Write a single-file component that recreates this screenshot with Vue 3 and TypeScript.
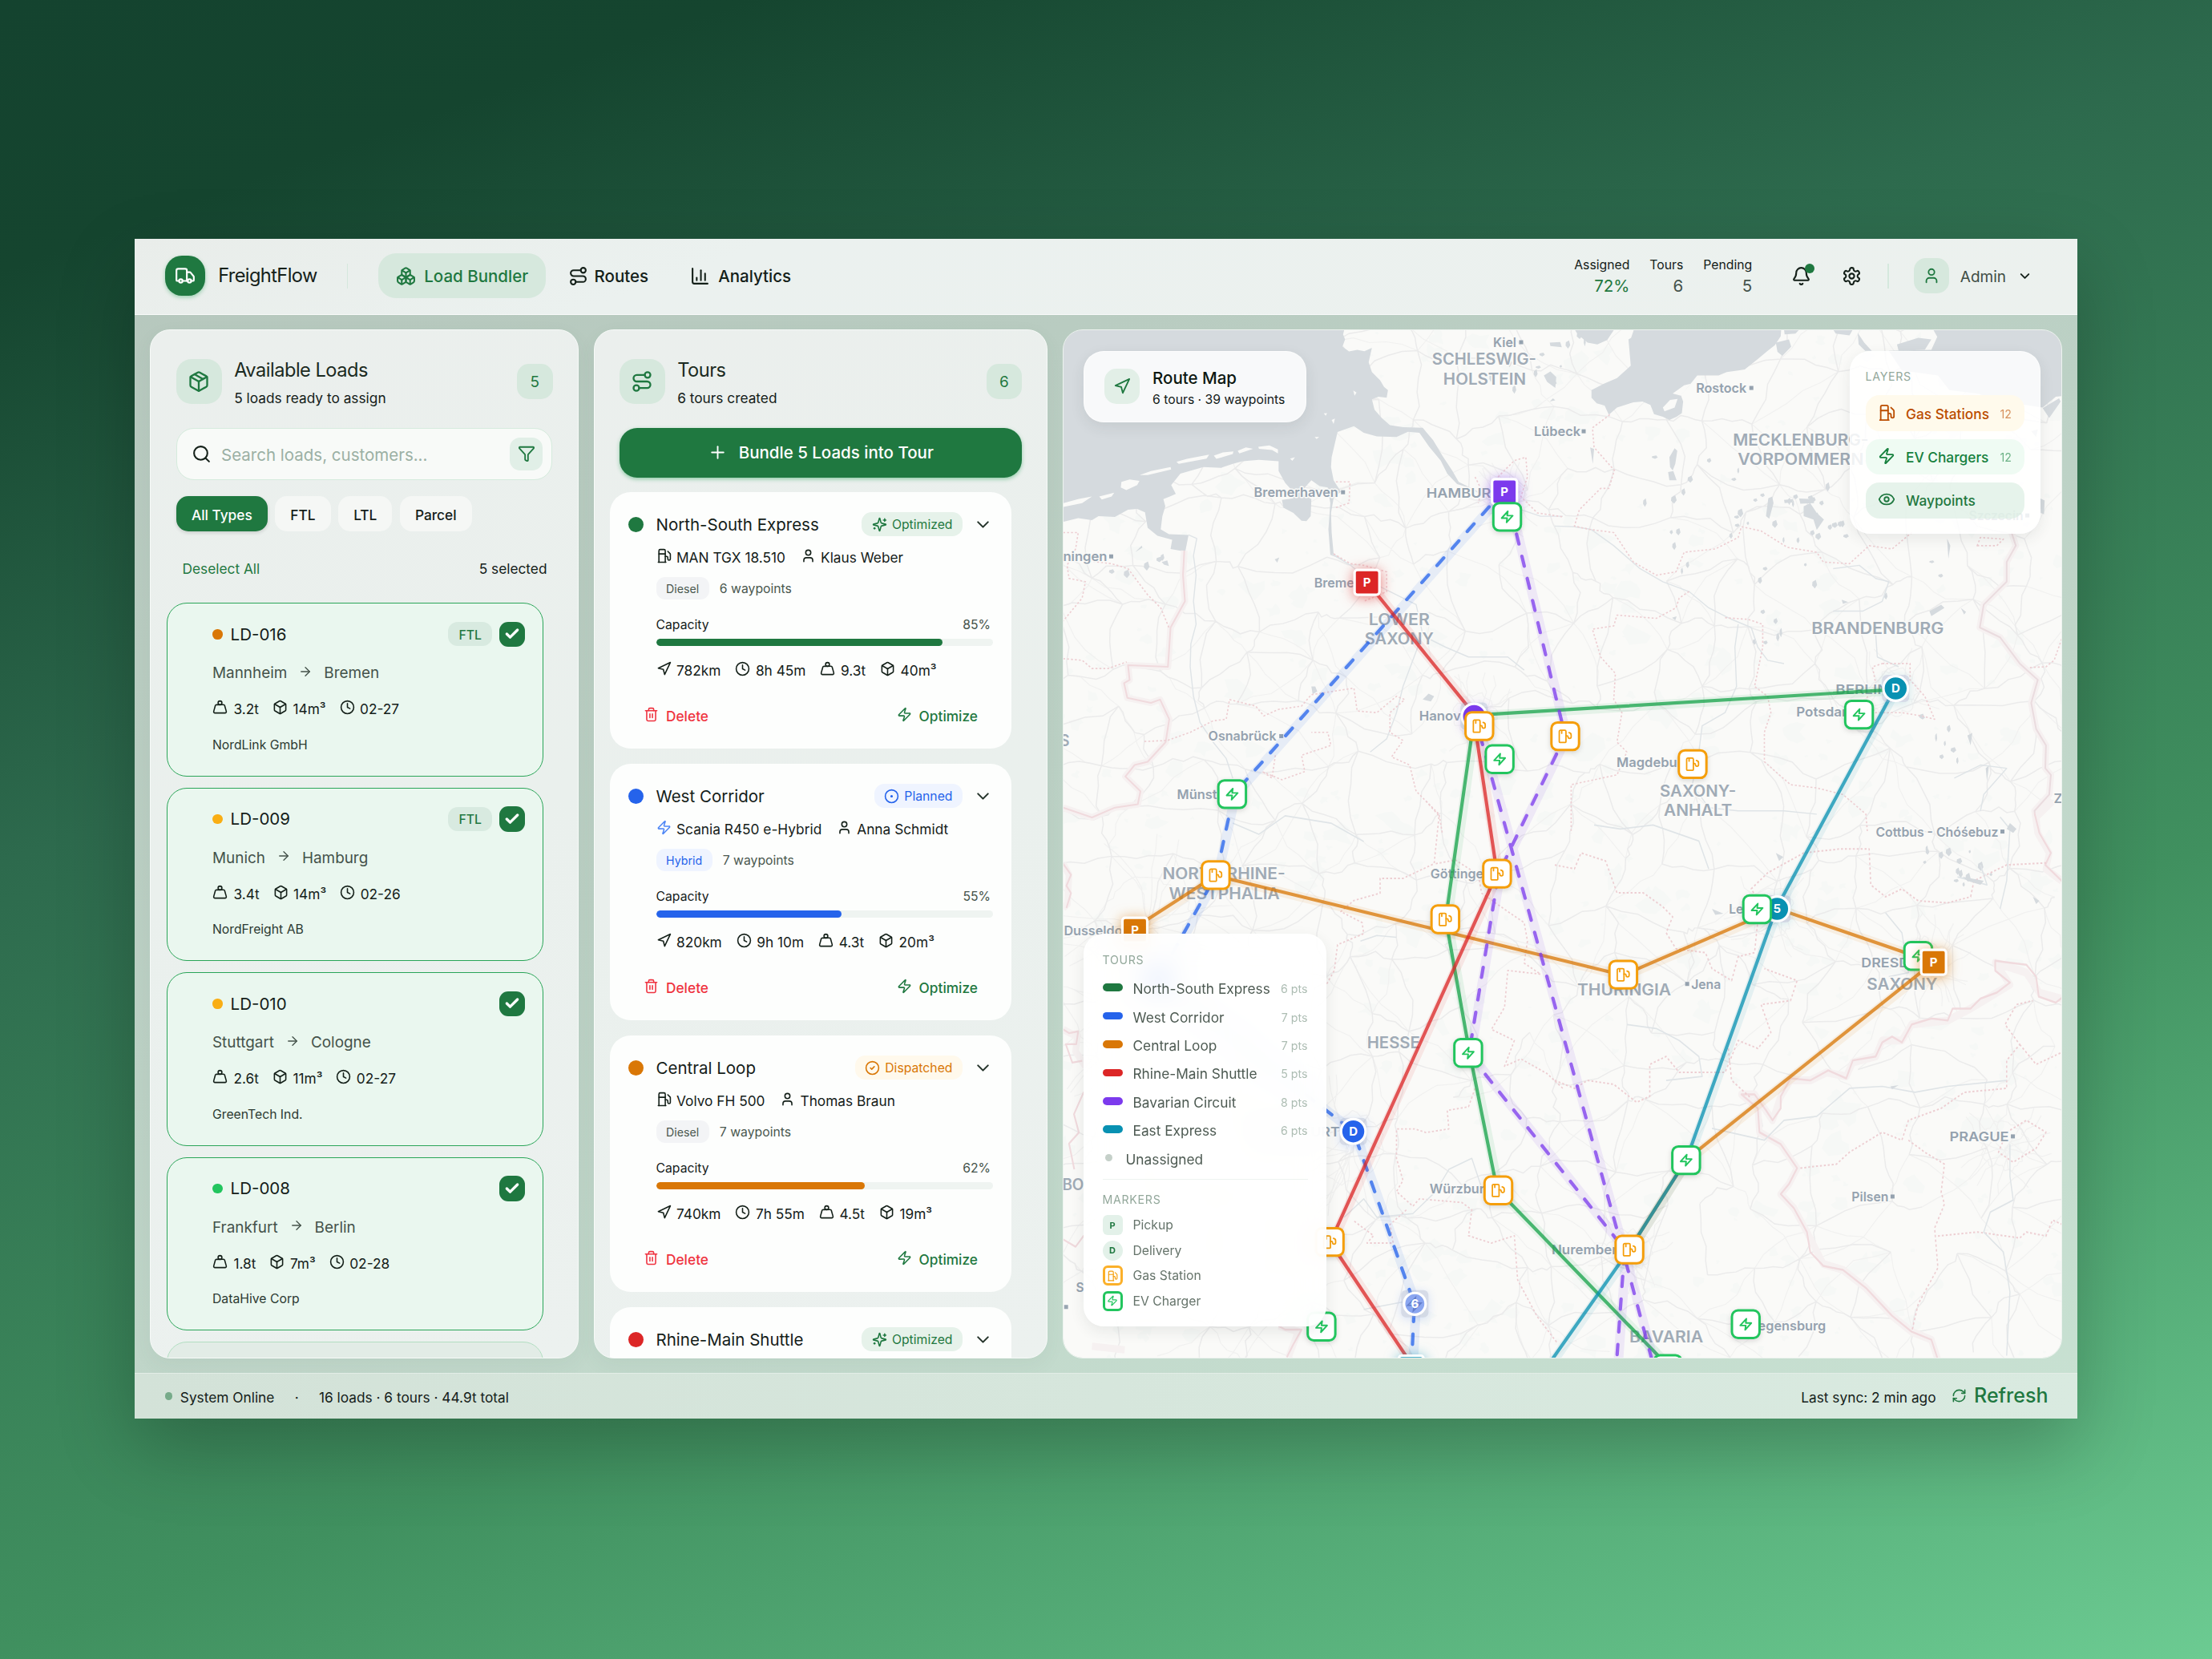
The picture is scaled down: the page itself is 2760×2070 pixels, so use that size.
<script setup lang="ts">
import { h } from 'vue'

const icons: Record<string, string> = {
  truck: '<path d="M14 18V6a2 2 0 0 0-2-2H4a2 2 0 0 0-2 2v11a1 1 0 0 0 1 1h2"/><path d="M15 18H9"/><path d="M19 18h2a1 1 0 0 0 1-1v-3.65a1 1 0 0 0-.22-.624l-3.48-4.35A1 1 0 0 0 17.52 8H14"/><circle cx="17" cy="18" r="2"/><circle cx="7" cy="18" r="2"/>',
  boxes: '<path d="M2.97 12.92A2 2 0 0 0 2 14.63v3.24a2 2 0 0 0 .97 1.71l3 1.8a2 2 0 0 0 2.06 0L12 19v-5.5l-5-3-4.03 2.42Z"/><path d="m7 16.5-4.74-2.85"/><path d="m7 16.5 5-3"/><path d="M7 16.5v5.17"/><path d="M12 13.5V19l3.97 2.38a2 2 0 0 0 2.06 0l3-1.8a2 2 0 0 0 .97-1.71v-3.24a2 2 0 0 0-.97-1.71L17 10.5l-5 3Z"/><path d="m17 16.5-5-3"/><path d="m17 16.5 4.74-2.85"/><path d="M17 16.5v5.17"/><path d="M7.97 4.42A2 2 0 0 0 7 6.13v4.37l5 3 5-3V6.13a2 2 0 0 0-.97-1.71l-3-1.8a2 2 0 0 0-2.06 0l-3 1.8Z"/><path d="M12 8 7.26 5.15"/><path d="m12 8 4.74-2.85"/><path d="M12 13.5V8"/>',
  route: '<circle cx="6" cy="19" r="3"/><path d="M9 19h8.5a3.5 3.5 0 0 0 0-7h-11a3.5 3.5 0 0 1 0-7H15"/><circle cx="18" cy="5" r="3"/>',
  chart: '<path d="M3 3v16a2 2 0 0 0 2 2h16"/><path d="M18 17V9"/><path d="M13 17V5"/><path d="M8 17v-3"/>',
  package: '<path d="M11 21.73a2 2 0 0 0 2 0l7-4A2 2 0 0 0 21 16V8a2 2 0 0 0-1-1.73l-7-4a2 2 0 0 0-2 0l-7 4A2 2 0 0 0 3 8v8a2 2 0 0 0 1 1.73z"/><path d="M12 22V12"/><path d="m3.3 7 8.7 5 8.7-5"/><path d="m7.5 4.27 9 5.15"/>',
  box: '<path d="M21 8a2 2 0 0 0-1-1.73l-7-4a2 2 0 0 0-2 0l-7 4A2 2 0 0 0 3 8v8a2 2 0 0 0 1 1.73l7 4a2 2 0 0 0 2 0l7-4A2 2 0 0 0 21 16Z"/><path d="m3.3 7 8.7 5 8.7-5"/><path d="M12 22V12"/>',
  weight: '<circle cx="12" cy="5" r="3"/><path d="M6.5 8a2 2 0 0 0-1.905 1.46L2.1 18.5A2 2 0 0 0 4 21h16a2 2 0 0 0 1.925-2.54L19.4 9.5A2 2 0 0 0 17.48 8Z"/>',
  clock: '<circle cx="12" cy="12" r="10"/><path d="M12 6v6l4 2"/>',
  fuel: '<path d="M3 22h12"/><path d="M4 9h10"/><path d="M14 22V4a2 2 0 0 0-2-2H6a2 2 0 0 0-2 2v18"/><path d="M14 13h2a2 2 0 0 1 2 2v2a2 2 0 0 0 4 0V9.83a2 2 0 0 0-.59-1.42L18 5"/>',
  user: '<path d="M19 21v-2a4 4 0 0 0-4-4H9a4 4 0 0 0-4 4v2"/><circle cx="12" cy="7" r="4"/>',
  nav: '<path d="M3 11 22 2 13 21 11 13Z"/>',
  trash: '<path d="M3 6h18"/><path d="M19 6v14c0 1-1 2-2 2H7c-1 0-2-1-2-2V6"/><path d="M8 6V4c0-1 1-2 2-2h4c1 0 2 1 2 2v2"/><path d="M10 11v6"/><path d="M14 11v6"/>',
  zap: '<path d="M4 14a1 1 0 0 1-.78-1.63l9.9-10.2a.5.5 0 0 1 .86.46l-1.92 6.02A1 1 0 0 0 13 10h7a1 1 0 0 1 .78 1.63l-9.9 10.2a.5.5 0 0 1-.86-.46l1.92-6.02A1 1 0 0 0 11 14z"/>',
  sparkles: '<path d="M9.937 15.5A2 2 0 0 0 8.5 14.063l-6.135-1.582a.5.5 0 0 1 0-.962L8.5 9.936A2 2 0 0 0 9.937 8.5l1.582-6.135a.5.5 0 0 1 .963 0L14.063 8.5A2 2 0 0 0 15.5 9.937l6.135 1.581a.5.5 0 0 1 0 .964L15.5 14.063a2 2 0 0 0-1.437 1.437l-1.582 6.135a.5.5 0 0 1-.963 0z"/><path d="M20 3v4"/><path d="M22 5h-4"/><path d="M4 17v2"/><path d="M5 18H3"/>',
  dot: '<circle cx="12" cy="12" r="10"/><circle cx="12" cy="12" r="1"/>',
  done: '<circle cx="12" cy="12" r="10"/><path d="m9 12 2 2 4-4"/>',
  chevron: '<path d="m6 9 6 6 6-6"/>',
  plus: '<path d="M5 12h14"/><path d="M12 5v14"/>',
  search: '<circle cx="11" cy="11" r="8"/><path d="m21 21-4.3-4.3"/>',
  funnel: '<path d="M10 20a1 1 0 0 0 .553.895l2 1A1 1 0 0 0 14 21v-7a2 2 0 0 1 .517-1.341L21.74 4.67A1 1 0 0 0 21 3H3a1 1 0 0 0-.742 1.67l7.225 7.989A2 2 0 0 1 10 14z"/>',
  arrow: '<path d="M5 12h14"/><path d="m12 5 7 7-7 7"/>',
  check: '<path d="M20 6 9 17l-5-5"/>',
  bell: '<path d="M10.268 21a2 2 0 0 0 3.464 0"/><path d="M3.262 15.326A1 1 0 0 0 4 17h16a1 1 0 0 0 .74-1.673C19.41 13.956 18 12.499 18 8A6 6 0 0 0 6 8c0 4.499-1.411 5.956-2.738 7.326"/>',
  gear: '<path d="M12.22 2h-.44a2 2 0 0 0-2 2v.18a2 2 0 0 1-1 1.73l-.43.25a2 2 0 0 1-2 0l-.15-.08a2 2 0 0 0-2.73.73l-.22.38a2 2 0 0 0 .73 2.73l.15.1a2 2 0 0 1 1 1.72v.51a2 2 0 0 1-1 1.74l-.15.09a2 2 0 0 0-.73 2.73l.22.38a2 2 0 0 0 2.73.73l.15-.08a2 2 0 0 1 2 0l.43.25a2 2 0 0 1 1 1.73V20a2 2 0 0 0 2 2h.44a2 2 0 0 0 2-2v-.18a2 2 0 0 1 1-1.73l.43-.25a2 2 0 0 1 2 0l.15.08a2 2 0 0 0 2.73-.73l.22-.39a2 2 0 0 0-.73-2.73l-.15-.08a2 2 0 0 1-1-1.74v-.5a2 2 0 0 1 1-1.74l.15-.09a2 2 0 0 0 .73-2.73l-.22-.38a2 2 0 0 0-2.73-.73l-.15.08a2 2 0 0 1-2 0l-.43-.25a2 2 0 0 1-1-1.73V4a2 2 0 0 0-2-2z"/><circle cx="12" cy="12" r="3"/>',
  refresh: '<path d="M3 12a9 9 0 0 1 9-9 9.75 9.75 0 0 1 6.74 2.74L21 8"/><path d="M21 3v5h-5"/><path d="M21 12a9 9 0 0 1-9 9 9.75 9.75 0 0 1-6.74-2.74L3 16"/><path d="M8 16H3v5"/>',
  eye: '<path d="M2.062 12.348a1 1 0 0 1 0-.696 10.75 10.75 0 0 1 19.876 0 1 1 0 0 1 0 .696 10.75 10.75 0 0 1-19.876 0"/><circle cx="12" cy="12" r="3"/>'
}

const Icon = (props: { name: string; size: number; weight?: number }) =>
  h('svg', {
    class: 'icon',
    width: props.size,
    height: props.size,
    viewBox: '0 0 24 24',
    fill: 'none',
    stroke: 'currentColor',
    'stroke-width': props.weight ?? 2,
    'stroke-linecap': 'round',
    'stroke-linejoin': 'round',
    innerHTML: icons[props.name]
  })
Icon.props = ['name', 'size', 'weight']

const stats = [
  { label: 'Assigned', value: '72%', hot: true },
  { label: 'Tours', value: '6', hot: false },
  { label: 'Pending', value: '5', hot: false }
]

const loads = [
  { id: 'LD-016', color: '#d97706', from: 'Mannheim', to: 'Bremen', t: '3.2t', v: '14m³', d: '02-27', who: 'NordLink GmbH', ftl: true },
  { id: 'LD-009', color: '#f9ae14', from: 'Munich', to: 'Hamburg', t: '3.4t', v: '14m³', d: '02-26', who: 'NordFreight AB', ftl: true },
  { id: 'LD-010', color: '#f9ae14', from: 'Stuttgart', to: 'Cologne', t: '2.6t', v: '11m³', d: '02-27', who: 'GreenTech Ind.', ftl: false },
  { id: 'LD-008', color: '#22c55e', from: 'Frankfurt', to: 'Berlin', t: '1.8t', v: '7m³', d: '02-28', who: 'DataHive Corp', ftl: false }
]

interface TourDetail {
  truck: string
  driver: string
  fuel: string
  wp: number
  cap: number
  km: string
  time: string
  t: string
  v: string
}
const tours: { name: string; color: string; status: string; si: string; sc: string; info?: TourDetail }[] = [
  { name: 'North-South Express', color: '#1f7840', status: 'Optimized', si: 'sparkles', sc: 'opt', info: { truck: 'MAN TGX 18.510', driver: 'Klaus Weber', fuel: 'Diesel', wp: 6, cap: 85, km: '782km', time: '8h 45m', t: '9.3t', v: '40m³' } },
  { name: 'West Corridor', color: '#2563eb', status: 'Planned', si: 'dot', sc: 'plan', info: { truck: 'Scania R450 e-Hybrid', driver: 'Anna Schmidt', fuel: 'Hybrid', wp: 7, cap: 55, km: '820km', time: '9h 10m', t: '4.3t', v: '20m³' } },
  { name: 'Central Loop', color: '#d97706', status: 'Dispatched', si: 'done', sc: 'disp', info: { truck: 'Volvo FH 500', driver: 'Thomas Braun', fuel: 'Diesel', wp: 7, cap: 62, km: '740km', time: '7h 55m', t: '4.5t', v: '19m³' } },
  { name: 'Rhine-Main Shuttle', color: '#dc2626', status: 'Optimized', si: 'sparkles', sc: 'opt' }
]

const legend = [
  { name: 'North-South Express', color: '#1f7840', pts: 6 },
  { name: 'West Corridor', color: '#2563eb', pts: 7 },
  { name: 'Central Loop', color: '#d97706', pts: 7 },
  { name: 'Rhine-Main Shuttle', color: '#dc2626', pts: 5 },
  { name: 'Bavarian Circuit', color: '#7c3aed', pts: 8 },
  { name: 'East Express', color: '#0891b2', pts: 6 }
]

const routes = [
  { c: '#2563eb', dash: true, d: 'M1877 612L1540 991L1518 1092L1445 1223L1689 1412L1765 1627L1761 1710' },
  { c: '#d97706', dash: false, d: 'M1416 1158L1517 1093L2025 1217L2217 1134L2412 1201L2104 1447L2033 1559' },
  { c: '#16a34a', dash: false, d: 'M2363 861L1840 893L1804 1147L1834 1315L1868 1484L2083 1706' },
  { c: '#dc2626', dash: false, d: 'M1706 727L1838 890L1868 1090L1660 1550L1760 1700' },
  { c: '#7c3aed', dash: true, d: 'M1879 612L1953 919L1870 1090L1833 1315L2027 1559L2017 1700M1839 890L2026 1565L2062 1700' },
  { c: '#0891b2', dash: false, d: 'M2363 861L2216 1134L2104 1447L2033 1559L1936 1697' }
]

const places: { t: string; x: number; y: number; w: number; big?: boolean; dot?: number }[] = [
  { t: 'Kiel', x: 1863, y: 434, w: 29, dot: 1898 },
  { t: 'SCHLESWIG-', x: 1787, y: 456, w: 130, big: true },
  { t: 'HOLSTEIN', x: 1801, y: 481, w: 103, big: true },
  { t: 'Lübeck', x: 1914, y: 545, w: 58, dot: 1976 },
  { t: 'Rostock', x: 2116, y: 491, w: 63, dot: 2185 },
  { t: 'Bremerhaven', x: 1565, y: 621, w: 105, dot: 1676 },
  { t: 'HAMBURG', x: 1780, y: 622, w: 94 },
  { t: 'ningen', x: 1327, y: 701, w: 55, dot: 1387 },
  { t: 'Bremen', x: 1640, y: 734, w: 60 },
  { t: 'LOWER', x: 1708, y: 781, w: 76, big: true },
  { t: 'SAXONY', x: 1703, y: 805, w: 86, big: true },
  { t: 'MECKLENBURG-', x: 2162, y: 557, w: 169, big: true },
  { t: 'VORPOMMERN', x: 2168, y: 581, w: 157, big: true },
  { t: 'Szczecin', x: 2456, y: 650, w: 68, dot: 2529 },
  { t: 'BRANDENBURG', x: 2260, y: 792, w: 165, big: true },
  { t: 'BERLIN', x: 2290, y: 867, w: 66 },
  { t: 'Potsdam', x: 2241, y: 895, w: 72 },
  { t: 'Hanover', x: 1771, y: 900, w: 68 },
  { t: 'Magdeburg', x: 2017, y: 958, w: 92 },
  { t: 'Osnabrück', x: 1508, y: 925, w: 85, dot: 1599 },
  { t: 'S', x: 1323, y: 932, w: 12, big: true },
  { t: 'Münster', x: 1469, y: 997, w: 66 },
  { t: 'SAXONY-', x: 2071, y: 994, w: 95, big: true },
  { t: 'ANHALT', x: 2076, y: 1018, w: 85, big: true },
  { t: 'Z', x: 2562, y: 1002, w: 11 },
  { t: 'Cottbus - Chóśebuz', x: 2340, y: 1044, w: 153, dot: 2498 },
  { t: 'NORTH RHINE-', x: 1451, y: 1097, w: 153, big: true },
  { t: 'WESTPHALIA', x: 1459, y: 1122, w: 138, big: true },
  { t: 'Göttingen', x: 1785, y: 1096, w: 76 },
  { t: 'Dusseldorf', x: 1328, y: 1167, w: 86 },
  { t: 'Leipzig', x: 2157, y: 1140, w: 54 },
  { t: 'THURINGIA', x: 1968, y: 1242, w: 117, big: true },
  { t: 'Jena', x: 2110, y: 1234, w: 37, dot: 2105 },
  { t: 'DRESDEN', x: 2322, y: 1207, w: 84 },
  { t: 'SAXONY', x: 2329, y: 1235, w: 88, big: true },
  { t: 'HESSE', x: 1706, y: 1308, w: 66, big: true },
  { t: 'FRANKFURT', x: 1564, y: 1418, w: 108 },
  { t: 'PRAGUE', x: 2432, y: 1424, w: 74, dot: 2511 },
  { t: 'Würzburg', x: 1784, y: 1489, w: 78 },
  { t: 'BO', x: 1326, y: 1485, w: 27, big: true },
  { t: 'Pilsen', x: 2310, y: 1499, w: 46, dot: 2361 },
  { t: 'Nuremberg', x: 1936, y: 1565, w: 92 },
  { t: 'S', x: 1343, y: 1612, w: 10 },
  { t: 'BAVARIA', x: 2033, y: 1675, w: 92, big: true },
  { t: 'Regensburg', x: 2183, y: 1660, w: 95 }
]

const stops: { k: 'ev' | 'gas' | 'sq' | 'ci'; x: number; y: number; c?: string; t?: string; fade?: boolean }[] = [
  { k: 'sq', x: 1877.3, y: 614.3, c: '#7c3aed', t: 'P' },
  { k: 'sq', x: 1705.9, y: 727.3, c: '#dc2626', t: 'P' },
  { k: 'ci', x: 1839.4, y: 894, c: '#7c3aed', t: '' },
  { k: 'ci', x: 2364.9, y: 859.6, c: '#0891b2', t: 'D' },
  { k: 'sq', x: 1416.5, y: 1161, c: '#d97706', t: 'P' },
  { k: 'ci', x: 2217.1, y: 1134.3, c: '#0891b2', t: '5' },
  { k: 'ci', x: 1688.8, y: 1411.8, c: '#2563eb', t: 'D' },
  { k: 'ci', x: 1765.5, y: 1626.7, c: '#2563eb', t: '6', fade: true },
  { k: 'sq', x: 1761, y: 1707, c: '#0891b2', t: '' },
  { k: 'ev', x: 1880.6, y: 645.7 },
  { k: 'gas', x: 1845.9, y: 906.5 },
  { k: 'ev', x: 1871.2, y: 947.8 },
  { k: 'ev', x: 1537.8, y: 991.4 },
  { k: 'gas', x: 1953, y: 919.2 },
  { k: 'gas', x: 2111.8, y: 953.9 },
  { k: 'ev', x: 2319.2, y: 892.2 },
  { k: 'gas', x: 1517.3, y: 1092.3 },
  { k: 'gas', x: 1868, y: 1090.5 },
  { k: 'gas', x: 1803.5, y: 1147.4 },
  { k: 'ev', x: 1832, y: 1314 },
  { k: 'gas', x: 1869.6, y: 1485.3 },
  { k: 'gas', x: 1659.4, y: 1549.6 },
  { k: 'ev', x: 1649.2, y: 1655.2 },
  { k: 'gas', x: 2025.3, y: 1216.4 },
  { k: 'ev', x: 2192.2, y: 1134.8 },
  { k: 'ev', x: 2393, y: 1193 },
  { k: 'sq', x: 2412.2, y: 1201, c: '#d97706', t: 'P' },
  { k: 'ev', x: 2103.7, y: 1447.7 },
  { k: 'gas', x: 2033, y: 1559.1 },
  { k: 'ev', x: 2178, y: 1652.2 },
  { k: 'ev', x: 2080.8, y: 1708 }
]

// Seeded generator for the faint road mesh and woodland patches of the base map
let seed = 20260227
const rnd = () => {
  seed = (seed * 1664525 + 1013904223) % 4294967296
  return seed / 4294967296
}
const cols = 21
const rows = 22
const mesh: number[][][] = []
for (let r = 0; r < rows; r++) {
  mesh.push([])
  for (let c = 0; c < cols; c++) {
    mesh[r].push([1310 + c * 64 + (rnd() - 0.5) * 56, 400 + r * 62 + (rnd() - 0.5) * 54])
  }
}
const wiggle = (a: number[], b: number[]) => {
  const n = 5
  const len = Math.hypot(b[0] - a[0], b[1] - a[1])
  const bow = (rnd() - 0.5) * len * 0.3
  const nx = (b[1] - a[1]) / len
  const ny = -(b[0] - a[0]) / len
  let d = `M${a[0].toFixed(1)} ${a[1].toFixed(1)}`
  for (let i = 1; i <= n; i++) {
    const t = i / n
    const o = i === n ? 0 : Math.sin(t * Math.PI) * bow + (rnd() - 0.5) * 7
    d += `L${(a[0] + (b[0] - a[0]) * t + nx * o).toFixed(1)} ${(a[1] + (b[1] - a[1]) * t + ny * o).toFixed(1)}`
  }
  return d
}
let roads = ''
let lanes = ''
for (let r = 0; r < rows - 1; r++) {
  for (let c = 0; c < cols - 1; c++) {
    if (rnd() < 0.82) roads += wiggle(mesh[r][c], mesh[r][c + 1])
    if (rnd() < 0.82) roads += wiggle(mesh[r][c], mesh[r + 1][c])
    if (rnd() < 0.45) lanes += wiggle(mesh[r][c], mesh[r + 1][c + 1])
    if (rnd() < 0.3) lanes += wiggle(mesh[r][c + 1], mesh[r + 1][c])
  }
}
// dense webs around the large conurbations
for (const [cx, cy, rad] of [[1430, 1150, 110], [1840, 893, 55], [2363, 865, 60], [1880, 625, 50], [1680, 1430, 90], [2210, 1140, 60], [2400, 1200, 60], [2033, 1560, 55], [2500, 1430, 60], [1400, 1300, 90]]) {
  for (let i = 0; i < 11; i++) {
    const a = rnd() * 6.28
    lanes += wiggle([cx + rnd() * 8, cy + rnd() * 8], [cx + Math.cos(a) * rad, cy + Math.sin(a) * rad])
  }
  for (let i = 0; i < 9; i++) {
    const a = (i / 9) * 6.28
    const b = ((i + 1) / 9) * 6.28
    lanes += wiggle([cx + Math.cos(a) * rad * 0.5, cy + Math.sin(a) * rad * 0.5], [cx + Math.cos(b) * rad * 0.5, cy + Math.sin(b) * rad * 0.5])
  }
}
let woods = ''
for (let i = 0; i < 900; i++) {
  const x = 1320 + rnd() * 1260
  const y = 410 + rnd() * 1290
  const s = 2 + rnd() * rnd() * 18
  for (let k = 0; k < 9; k++) {
    const a = (k / 9) * 6.28
    const q = s * (0.4 + rnd() * 1.1)
    woods += `${k ? 'L' : 'M'}${(x + Math.cos(a) * q).toFixed(1)} ${(y + Math.sin(a) * q * 0.8).toFixed(1)}`
  }
  woods += 'Z'
}
let ponds = ''
for (const [px, py, spread, n] of [[2230, 640, 70, 24], [2440, 1080, 45, 14], [2300, 760, 120, 12], [2410, 920, 60, 8], [1900, 460, 60, 9], [2110, 600, 60, 8], [1420, 700, 40, 5], [1990, 430, 60, 5], [2170, 700, 90, 8]]) {
  for (let i = 0; i < n; i++) {
    const x = (px + (rnd() - 0.5) * 2 * spread).toFixed(1)
    const y = (py + (rnd() - 0.5) * spread).toFixed(1)
    const w = 1.5 + rnd() * 3.5
    const g = 2 + rnd() * 5
    ponds += `M${x} ${y}l${w} ${-g * 0.4}l${w * 0.4} ${g}l${-w * 0.7} ${g * 0.7}l${-w * 0.8} ${-g * 0.6}Z`
  }
}
</script>

<template>
  <div class="stage">
    <div class="app">
      <header class="top">
        <div class="logo"><Icon name="truck" :size="26" /></div>
        <span class="brand">FreightFlow</span>
        <i class="rule first"></i>
        <nav>
          <a class="on"><Icon name="boxes" :size="25" />Load Bundler</a>
          <a><Icon name="route" :size="25" />Routes</a>
          <a><Icon name="chart" :size="25" />Analytics</a>
        </nav>
        <div class="stats">
          <div v-for="s in stats" :key="s.label">
            <span>{{ s.label }}</span><b :class="{ hot: s.hot }">{{ s.value }}</b>
          </div>
        </div>
        <div class="bell"><Icon name="bell" :size="25" /><i></i></div>
        <Icon name="gear" :size="25" class="gear" />
        <i class="rule second"></i>
        <div class="avatar"><Icon name="user" :size="22" /></div>
        <span class="admin">Admin</span>
        <Icon name="chevron" :size="19" :weight="2.4" />
      </header>

      <main>
        <section class="panel">
          <div class="head">
            <div class="tile"><Icon name="package" :size="28" /></div>
            <div class="titles"><h2>Available Loads</h2><p>5 loads ready to assign</p></div>
            <span class="count">5</span>
          </div>
          <div class="search">
            <Icon name="search" :size="25" :weight="2" />
            <span>Search loads, customers...</span>
            <div class="filter"><Icon name="funnel" :size="22" /></div>
          </div>
          <div class="chips">
            <span class="on">All Types</span><span>FTL</span><span>LTL</span><span>Parcel</span>
          </div>
          <div class="bulk"><span class="green">Deselect All</span><span>5 selected</span></div>
          <div class="loads">
            <article v-for="l in loads" :key="l.id" class="load">
              <div class="row1">
                <i :style="{ background: l.color }"></i><b>{{ l.id }}</b>
                <span v-if="l.ftl" class="ftl">FTL</span>
                <span class="tick"><Icon name="check" :size="20" :weight="4" /></span>
              </div>
              <div class="row2">{{ l.from }}<Icon name="arrow" :size="18" :weight="1.8" />{{ l.to }}</div>
              <div class="row3">
                <span><Icon name="weight" :size="19" />{{ l.t }}</span>
                <span><Icon name="box" :size="19" />{{ l.v }}</span>
                <span><Icon name="clock" :size="19" />{{ l.d }}</span>
              </div>
              <div class="row4">{{ l.who }}</div>
            </article>
            <article class="load ghost"></article>
          </div>
        </section>

        <section class="panel">
          <div class="head two">
            <div class="tile"><Icon name="route" :size="28" /></div>
            <div class="titles"><h2>Tours</h2><p>6 tours created</p></div>
            <span class="count">6</span>
          </div>
          <button class="bundle"><Icon name="plus" :size="25" :weight="1.8" />Bundle 5 Loads into Tour</button>
          <div class="tours">
            <article v-for="t in tours" :key="t.name" class="tour">
              <div class="t1">
                <i :style="{ background: t.color }"></i><b>{{ t.name }}</b>
                <span class="badge" :class="t.sc"><Icon :name="t.si" :size="19" />{{ t.status }}</span>
                <Icon name="chevron" :size="25" class="chev" />
              </div>
              <template v-if="t.info">
                <div class="t2">
                  <span><Icon :name="t.info.fuel === 'Hybrid' ? 'zap' : 'fuel'" :size="19" :class="{ blue: t.info.fuel === 'Hybrid' }" />{{ t.info.truck }}</span>
                  <span><Icon name="user" :size="19" />{{ t.info.driver }}</span>
                </div>
                <div class="t3"><span :class="{ hyb: t.info.fuel === 'Hybrid' }">{{ t.info.fuel }}</span>{{ t.info.wp }} waypoints</div>
                <div class="t4"><span>Capacity</span><em>{{ t.info.cap }}%</em></div>
                <div class="bar"><i :style="{ width: t.info.cap + '%', background: t.color }"></i></div>
                <div class="t5">
                  <span><Icon name="nav" :size="19" />{{ t.info.km }}</span>
                  <span><Icon name="clock" :size="19" />{{ t.info.time }}</span>
                  <span><Icon name="weight" :size="19" />{{ t.info.t }}</span>
                  <span><Icon name="box" :size="19" />{{ t.info.v }}</span>
                </div>
                <div class="t6">
                  <span class="del"><Icon name="trash" :size="19" />Delete</span>
                  <span class="green"><Icon name="zap" :size="19" />Optimize</span>
                </div>
              </template>
            </article>
          </div>
        </section>

        <section class="map">
          <svg class="canvas" viewBox="1327.6 413 1243.8 1280" preserveAspectRatio="none">
            <rect x="1300" y="400" width="1300" height="1320" fill="#fafaf8" />
            <path :d="woods" fill="#f6f8f6" />
            <path :d="lanes" class="lane" />
            <path :d="roads" class="road" />
            <path :d="ponds" class="water" />

            <g transform="translate(1310 400) scale(.40816)">
              <path class="sea" d="M30 20H903L897 45 903 60 895 82 915 97 940 92 962 96 985 86 975 130 985 160 1010 185 1022 205 1034 215 1030 238 1005 235 985 243 993 275 1015 300 1040 322 1080 328 1140 330 1172 368 1200 415 1230 460 1250 495 1290 515 1245 502 1215 470 1195 430 1160 388 1130 345 1095 342 1060 358 1000 356 960 345 930 325 880 343 862 420 860 450 868 490 890 525 868 545 860 590 862 650 868 715 900 735 858 718 852 640 858 560 850 512 825 508 800 490 780 512 770 530 800 548 798 600 785 615 770 614 745 590 715 574 710 550 745 545 740 520 720 498 700 462 700 432 640 428 590 432 560 440 525 452 470 450 400 470 372 505 386 532 368 540 348 548 354 570 345 600 340 640 365 655 425 657 415 708 370 700 375 672 330 660 300 635 292 588 268 578 240 580 200 602 150 600 130 612 88 606 42 617 30 617Z" />
              <path class="isle" d="M42 560 90 547 130 540 100 560 42 572ZM152 540 198 528 190 540 160 549ZM220 495 245 488 275 492 268 505 235 520 218 512ZM276 474 310 462 370 450 372 457 300 474ZM388 434 420 425 488 412 480 424 395 440ZM502 415 530 405 562 402 560 410 510 425ZM575 400 600 390 622 394 580 408ZM638 388 672 384 698 396 698 408 680 398 640 394ZM838 286 848 285 844 293ZM862 306 872 302 868 318ZM928 216 938 222 932 232ZM810 358 824 358 816 364ZM735 424 750 420 742 431Z" />
              <path class="water" d="M1140 1160 1158 1142 1175 1150 1165 1166ZM800 1120 812 1120 818 1135 804 1144ZM688 732 702 726 696 742ZM1510 170 1530 158 1548 175 1545 208 1520 190ZM1528 70 1560 68 1565 84 1530 80ZM343 740 360 735 365 752 350 748ZM262 710 282 690 284 696ZM1528 250 1538 240 1545 246Z" />
              <path class="river" d="M425 657 450 668 440 720 448 780 440 860 448 930 432 990 430 1060 440 1150 460 1230 500 1290 540 1340 560 1400M862 715 920 750 980 800 1040 830 1120 870 1140 960 1110 1040 1080 1120 1060 1200 1030 1280 980 1320M1290 515 1360 560 1440 580 1500 600 1568 600M1150 970 1210 1000 1280 1030 1400 1030 1450 1070" />
              <path class="halo" d="M412 705 408 780 414 860 370 940 362 1060 240 1055 245 1100 228 1110 238 1155 310 1170 338 1160 366 1220 355 1290 300 1350 260 1360 232 1395 278 1440 270 1480 200 1490 130 1520 42 1490" />
              <path class="line" d="M412 705 408 780 414 860 370 940 362 1060 240 1055 245 1100 228 1110 238 1155 310 1170 338 1160 366 1220 355 1290 300 1350 260 1360 232 1395 278 1440 270 1480 200 1490 130 1520 42 1490" />
              <path class="dots" d="M42 650 88 650 80 700 54 750 60 790 110 800 100 850 42 920M110 735 190 745 240 760 300 840 340 880 365 940M42 1035 100 1040 130 1065 180 1065 236 1045M868 715 920 745 960 750 1030 770 1030 830 960 860M875 495 918 495 915 560 870 575M1300 480 1320 520 1310 560M1370 480 1420 430 1455 420 1460 480 1440 540 1490 590 1568 602M290 1288 360 1285 430 1260 500 1225 540 1220 550 1160 630 1180 655 1210 700 1190 770 1180 800 1145 930 1125 940 1195 1000 1200 1060 1150 1085 1160 1040 1200 1040 1260 1080 1285 1045 1335 1100 1360 1120 1440 1190 1510 1200 1568M690 1330 680 1400 650 1380 710 1405 780 1380 770 1330 860 1300 850 1260 800 1260" />
            </g>

            <g transform="translate(1940 400) scale(.40816)">
              <path class="sea" d="M245 20 233 55 225 60 232 140 190 178 150 195 112 215 112 238 128 255 152 262 165 290 190 268 240 252 268 250 292 260 303 288 330 296 350 306 372 296 388 285 392 250 385 230 415 195 435 170 500 170 525 160 560 155 580 152 620 120 650 95 672 78 690 50 692 20ZM55 20 70 45 100 70 130 75 160 62 188 20ZM1150 20 1168 52 1150 92 1020 95 1060 155 1170 170 1205 215 1290 225 1370 250 1490 268 1530 235 1560 232V20Z" />
              <path class="isle" d="M330 268 352 245 375 242 366 268 335 280ZM360 225 395 200 415 195 385 232Z" />
              <path class="water" d="M675 70 715 60 722 82 695 110 680 98ZM700 30 745 32 735 42 702 45ZM850 30 910 30 900 48 858 42ZM925 40 945 70 968 95 948 95 928 75ZM1045 75 1110 55 1150 60 1130 92 1050 95ZM350 420 366 392 374 400 368 440 360 460 352 450ZM346 465 362 462 372 490 350 490ZM760 570 780 560 800 590 822 610 800 642 790 610 760 600ZM652 545 664 540 668 560 655 608 645 600ZM700 550 728 548 725 558 702 560ZM746 546 790 548 792 560 750 562ZM876 855 896 862 880 868ZM1144 890 1180 870 1190 880 1150 905ZM1240 880 1256 892 1250 900ZM1198 668 1208 690 1202 730ZM1482 545 1496 552 1494 594 1484 590ZM1455 340 1475 335 1470 358ZM1260 1270 1275 1262 1270 1300ZM1316 1370 1326 1360 1320 1410ZM358 910 372 906 368 918ZM108 390 120 395 116 440ZM1490 270 1540 240 1545 250 1510 300Z" />
              <path class="river" d="M0 630 60 632 110 640 180 690 260 760 330 800 410 830 470 880 540 915 600 940 620 1000 650 1040 700 1050M850 760 930 750 980 790 1020 800 1000 860 940 890 850 890M980 960 985 1030 1050 1060M560 930 550 1000 555 1120 520 1200 450 1240 440 1320 420 1420 470 1490 560 1500 700 1500 800 1510M1220 1400 1300 1360 1380 1370 1310 1450 1300 1500" />
              <path class="halo" d="M1395 650 1408 690 1380 740 1380 800 1310 870 1298 940 1360 970 1420 1050 1475 1100 1455 1170 1470 1250 1500 1300 1498 1370 1515 1390 1510 1450 1465 1500 1475 1568" />
              <path class="line dim" d="M1395 650 1408 690 1380 740 1380 800 1310 870 1298 940 1360 970 1420 1050 1475 1100 1455 1170 1470 1250 1500 1300 1498 1370 1515 1390 1510 1450 1465 1500 1475 1568" />
              <path class="dots" d="M168 290 115 330 120 390 182 460 165 515 140 515 75 580 60 630 105 640 180 650 240 740 310 780 370 770 395 710 490 700 560 665 570 632 630 645 710 695 800 710 820 740 900 745 960 690 1030 700 1090 650M410 830 380 850 370 880 310 912 190 902 180 935 115 945 140 1030 185 1080 180 1160 205 1200 190 1290 220 1320 190 1390 50 1420 50 1568M520 910 590 915 635 930 635 1000 610 1120 650 1150 660 1200 640 1260 640 1350 720 1420 800 1430 880 1450 950 1510 955 1568M1000 1050 1085 1050 1085 1100 1130 1150 1160 1220 1120 1210 1060 1200 980 1200 950 1160 980 1110 970 1060 1000 1050M1548 975 1525 1040 1500 1060 1450 1062M1290 690 1350 690 1370 670 1300 665Z" />
            </g>

            <g transform="translate(1310 1000) scale(.40816 .45918)">
              <path class="halo" d="M42 170 60 200 55 280 42 290M42 620 85 640 80 680 110 720M130 1480 230 1490M700 1425 760 1440 730 1510" />
              <path class="line" d="M42 170 66 200 52 230 66 250 52 290M42 620 60 630 88 625 82 660 50 660 70 710 100 705M105 790 75 850 90 900 60 930 76 1000M42 1190 80 1210 105 1180M700 1425 720 1435 770 1435 745 1475 725 1510" />
              <path class="dots" d="M1150 0 1190 40 1175 170 1080 210 1010 210 1010 250 930 270 890 300 955 330 960 360 880 390 870 460 845 500M1180 170 1240 160 1310 200 1320 250 1400 300 1450 330 1460 380 1450 440 1500 470 1400 460 1390 560 1350 620 1420 650 1390 720 1440 700 1520 740 1568 780M1300 780 1280 830 1215 840 1220 890 1150 900 1115 890 1060 890 1060 970 1080 1030 1060 1060 1110 1100 1130 1080 1260 1090 1290 1110 1280 1180 1350 1200 1420 1180 1430 1300 1490 1400 1550 1470M1090 1110 1040 1150 1050 1200 970 1200 990 1180 930 1140" />
              <path class="river" d="M900 1130 960 1080 1000 1130 1110 1120 1180 1060 1220 1000 1290 970 1320 1050 1370 1080M960 1380 1080 1360M560 60 640 90 720 40 860 60 960 110M950 380 1000 365 1060 370" />
              <rect x="45" y="1368" width="12" height="11" fill="#98a5b1" />
            </g>

            <g transform="translate(1940 1000) scale(.40816 .49744)">
              <path class="halo" d="M1568 500 1480 480 1440 430 1345 405 1390 460 1330 490 1270 520 1200 550 1090 560 1060 600 1000 600 980 640 910 655 890 690 830 680 780 700 720 700 690 740 665 800 640 770 610 735 570 735 620 770 625 830 690 860 740 920 715 960 690 985 730 1020 770 1080 820 1160 880 1175 950 1220 1030 1290 1090 1330 1150 1350 1170 1400M1520 0 1470 40 1475 80 1510 130 1500 170 1548 200" />
              <path class="line" d="M1568 480 1530 505 1478 490 1470 440 1440 410 1390 405 1345 400 1345 425 1390 455 1350 480 1300 495 1270 520 1215 520 1200 550 1150 545 1090 560 1060 605 1030 590 1000 605 980 640 910 650 890 695 835 675 780 700 720 695 690 740 690 770 665 800 645 775 610 735 570 735 620 770 625 830 690 860 740 920 715 960 690 985 730 1020 770 1080 780 1130 820 1165 880 1175 950 1220 1030 1290 1090 1330 1150 1350 1170 1400M1465 30 1480 80 1515 130 1498 160 1548 200" />
              <path class="dots" d="M0 160 60 170 80 130 155 150 190 230 270 230 330 265 360 290 340 330 370 370 460 380 480 420 540 450 560 390 610 380 620 300 650 290 600 220 650 180 760 130 870 120 960 120 965 210 1010 240 1060 220 1110 250 1200 255 1270 240 1280 200 1380 160 1500 155M0 700 60 720 100 700 180 710 250 755 290 740 290 660 340 640 380 680 520 680 560 600 620 620 660 580 630 510 720 500 740 450 640 420M530 620 540 700 600 745M750 920 800 915 860 910 900 880 1000 830 1060 850 1080 800 1180 770 1250 730 1380 720 1380 650 1420 610 1375 560 1410 510 1460 500M1420 610 1470 660 1548 630M1080 850 1130 880 1190 910 1180 980 1190 1010 1160 1070 1170 1170 1110 1260 1090 1330M1170 1090 1290 1080 1420 1095 1440 1080 1500 1090 1520 1050 1560 1065M1380 830 1440 800 1500 830 1470 870 1400 905 1355 880Z" />
              <path class="river" d="M1390 860 1390 940 1400 1000 1330 1030 1310 1080 1370 1130 1390 1230 1380 1390M480 820 640 850 700 800 800 790 900 720 1000 715 1100 730 1200 715 1380 700M220 560 310 570 380 600 440 640 450 690 340 700M1360 40 1390 70 1380 200 1360 270M1020 440 1080 430 1060 330 1010 280M120 60 200 70 300 60 440 100 470 170M1230 190 1320 210 1300 160" />
              <path class="water" d="M1390 55 1410 70 1400 80 1380 70ZM1245 190 1310 200 1300 210 1260 200ZM1460 240 1480 250 1470 258ZM675 130 698 140 685 150ZM480 270 515 282 490 285ZM1025 715 1050 712 1030 722Z" />
            </g>

            <g class="places">
              <template v-for="p in places" :key="p.t + p.x">
                <text :x="p.x" :y="p.y" :class="{ big: p.big }" :textLength="p.w" lengthAdjust="spacingAndGlyphs">{{ p.t }}</text>
                <rect v-if="p.dot" :x="p.dot - 2.5" :y="p.y - 8.5" width="5" height="5" />
              </template>
            </g>

            <circle cx="1445" cy="1223" r="19" fill="#2563eb" opacity=".9" />

            <g v-for="(r, i) in routes" :key="i" fill="none" stroke-linejoin="round" stroke-linecap="round">
              <path :d="r.d" :stroke="r.c" stroke-width="12" stroke-opacity=".09" transform="translate(2 1)" />
              <path :d="r.d" :stroke="r.c" stroke-width="4.2" stroke-opacity=".76" :stroke-dasharray="r.dash ? '12.6 15.8' : undefined" />
            </g>

            <g v-for="(s, i) in stops" :key="'s' + i" :transform="`translate(${s.x} ${s.y})`">
              <template v-if="s.k === 'ev' || s.k === 'gas'">
                <rect class="mk" x="-17.2" y="-17.2" width="34.4" height="34.4" rx="7.6" fill="#fff" :stroke="s.k === 'ev' ? '#22c55e' : '#f59e0b'" stroke-width="3" />
                <g v-if="s.k === 'ev'" transform="translate(-9.2 -9.2) scale(.77)" fill="none" stroke="#22c55e" stroke-width="2.5" stroke-linejoin="round" stroke-linecap="round">
                  <path d="M13 3 3 14h9l-1 7 10-11h-9z" />
                </g>
                <g v-else transform="translate(-8.2 -9) scale(.76)" fill="none" stroke="#f59e0b" stroke-width="2.3" stroke-linejoin="round" stroke-linecap="round">
                  <path d="M1 21V4a2 2 0 0 1 2-2h7a2 2 0 0 1 2 2v17a1 1 0 0 1-1 1H2a1 1 0 0 1-1-1Z" /><path d="M5 3v4M12 11h1.500a2 2 0 0 1 2 2a2.500 2.500 0 0 0 5 0V10a4 4 0 0 0-3.500-4" />
                </g>
              </template>
              <g v-else>
                <rect v-if="s.k === 'sq'" x="-15.500" y="-15.500" width="31" height="31" rx="3.500" :fill="s.c" stroke="#fff" stroke-width="3.200" :style="{ filter: `drop-shadow(0 2px 8px ${s.c}99)` }" />
                <template v-else>
                  <rect x="-17" y="-17" width="34" height="34" rx="6" fill="#94a3c8" opacity=".35" :style="{ filter: `drop-shadow(0 2px 6px ${s.c}80)` }" />
                  <circle :r="s.fade ? 13.5 : 15.3" :fill="s.fade ? '#8aa6f0' : s.c" stroke="#fff" stroke-width="3.200" />
                </template>
                <path v-if="s.fade" d="M1-8-9 2h8l-1 7 10-10h-8z" fill="none" stroke="#4a63b0" stroke-width="1.500" opacity=".6" />
                <text v-if="s.t" class="mt" text-anchor="middle" y="5.300">{{ s.t }}</text>
              </g>
            </g>
          </svg>

          <div class="card title">
            <div class="sq"><Icon name="nav" :size="22" /></div>
            <div class="tt"><b>Route Map</b><span>6 tours · 39 waypoints</span></div>
          </div>

          <div class="card layers">
            <small>LAYERS</small>
            <div class="lay gas"><Icon name="fuel" :size="22" />Gas Stations<em>12</em></div>
            <div class="lay ev"><Icon name="zap" :size="22" />EV Chargers<em>12</em></div>
            <div class="lay wp"><Icon name="eye" :size="22" />Waypoints</div>
          </div>

          <div class="card legend">
            <small>TOURS</small>
            <div v-for="l in legend" :key="l.name" class="lg">
              <i :style="{ background: l.color }"></i>{{ l.name }}<em>{{ l.pts }} pts</em>
            </div>
            <div class="lg un"><i></i>Unassigned</div>
            <hr />
            <small class="mk2">MARKERS</small>
            <div class="lm"><span class="p">P</span>Pickup</div>
            <div class="lm"><span class="p d">D</span>Delivery</div>
            <div class="lm"><span class="g"><Icon name="fuel" :size="14" /></span>Gas Station</div>
            <div class="lm"><span class="g e"><Icon name="zap" :size="14" /></span>EV Charger</div>
          </div>
        </section>
      </main>

      <footer>
        <i></i><span class="sys">System Online</span><span class="sep">·</span><span>16 loads · 6 tours · 44.9t total</span>
        <span class="sync">Last sync: 2 min ago</span>
        <Icon name="refresh" :size="19" /><b>Refresh</b>
      </footer>
    </div>
  </div>
</template>

<style>
body {
  margin: 0;
}
</style>

<style scoped>
.stage {
  box-sizing: border-box;
  width: 2760px;
  height: 2070px;
  padding: 298px 168px 300px;
  overflow: hidden;
  background: linear-gradient(160deg, #14432f 0%, #15452f 11%, #2d6a4d 35%, #40905f 67%, #6ccb92 100%);
  font-family: Inter, 'Noto Sans', sans-serif;
  color: #142019;
  font-size: 17.3px;
}
.stage * {
  box-sizing: border-box;
}
.icon {
  flex: none;
  display: block;
}
.app {
  width: 2424px;
  height: 1472px;
  display: flex;
  flex-direction: column;
  background: linear-gradient(160deg, #b6c7bd 0%, #bcd1c5 45%, #c8e1d2 100%);
  box-shadow: 0 36px 90px rgba(0, 0, 0, 0.23);
}
b,
em,
h2 {
  font-weight: 400;
  font-style: normal;
  margin: 0;
}
.green {
  color: #1f7840;
}

.top {
  height: 94.5px;
  flex: none;
  display: flex;
  align-items: center;
  padding: 0 56px 1.5px 37.8px;
  background: linear-gradient(160deg, #e9edea, #ebf1ef 30%, #ecf1ee);
  border-bottom: 1.6px solid #f8faf9;
}
.logo {
  width: 50.4px;
  height: 50.4px;
  border-radius: 21px;
  background: #1f7840;
  color: #fff;
  display: grid;
  place-items: center;
  box-shadow: 0 2px 5px rgba(34, 160, 84, 0.4);
}
.brand {
  margin: -2px 0 0 16px;
  width: 125px;
  font-size: 23.6px;
  letter-spacing: -0.6px;
  white-space: nowrap;
}
.rule {
  width: 1.6px;
  height: 31px;
  background: #d5e8dd;
}
.first {
  margin: 0 38px 0 35.5px;
}
nav {
  display: flex;
}
nav a {
  display: flex;
  align-items: center;
  height: 55.5px;
  padding: 0 22px;
  border-radius: 22px;
  gap: 10px;
  font-size: 20.5px;
  font-weight: 500;
  margin-right: 8px;
}
nav a + a {
  gap: 8px;
}
nav a:nth-child(3) {
  gap: 10px;
}
nav .on {
  background: #d6e8dd;
  color: #1f7840;
  margin-right: 5.4px;
}
.stats {
  margin-left: auto;
  margin-top: 2px;
  display: flex;
  gap: 25px;
}
.stats div {
  text-align: right;
  display: flex;
  flex-direction: column;
}
.stats span {
  font-size: 15.75px;
  line-height: 23px;
}
.stats b {
  font-size: 20.5px;
  line-height: 30px;
  color: #45534b;
}
.stats .hot {
  color: #1f7840;
}
.bell {
  position: relative;
  margin-left: 49px;
}
.bell i {
  position: absolute;
  right: -4px;
  top: -3px;
  width: 12.6px;
  height: 12.6px;
  border-radius: 50%;
  background: #1f7840;
}
.gear {
  margin-left: 38px;
}
.second {
  margin: 0 31px 0 32px;
}
.avatar {
  width: 44px;
  height: 44px;
  border-radius: 15px;
  background: #d6e8dd;
  color: #1f7840;
  display: grid;
  place-items: center;
}
.admin {
  margin: 3px 14px 0;
  font-size: 19px;
  color: #3f4d45;
}

main {
  flex: 1;
  min-height: 0;
  padding: 18.9px 19px;
  display: grid;
  grid-template-columns: 534.5px 566.5px minmax(0, 1fr);
  gap: 19px;
}
.panel {
  border: 1.6px solid #f7faf8;
  border-radius: 25px;
  background: linear-gradient(165deg, #ebefed, #eaf0ed 50%, #ecf1ef);
  overflow: hidden;
  display: flex;
  flex-direction: column;
  min-height: 0;
  box-shadow: 0 8px 24px rgba(60, 110, 80, 0.06);
}
.head {
  display: flex;
  align-items: center;
  margin: 35.4px 31px 0 32px;
  height: 56.7px;
}
.tile {
  width: 56.7px;
  height: 56.7px;
  border-radius: 19px;
  background: #d6e8dd;
  color: #1f7840;
  display: grid;
  place-items: center;
}
.titles {
  margin: 2px 0 0 15.5px;
}
.titles h2 {
  font-size: 23.6px;
  line-height: 35px;
  letter-spacing: -0.5px;
  color: #1b2a21;
}
.titles p {
  margin: 4px 0 0;
  font-size: 17.3px;
  line-height: 28px;
}
.count {
  margin-left: auto;
  width: 44.500px;
  height: 44.500px;
  border-radius: 15px;
  background: #d6e8dd;
  color: #1f7840;
  display: grid;
  place-items: center;
  font-size: 18.9px;
}
.search {
  margin: 29.5px 31.500px 0 32px;
  height: 65px;
  border: 1.6px solid #d5ebdd;
  border-radius: 22px;
  background: #f8faf8;
  display: flex;
  align-items: center;
  padding: 0 11px 0 17.500px;
}
.search span {
  margin-left: 12.5px;
  margin-top: 2px;
  font-size: 20.5px;
  color: #9bb0a4;
}
.filter {
  margin-left: auto;
  width: 41px;
  height: 41px;
  border-radius: 13px;
  background: #e1efe7;
  color: #1f7840;
  display: grid;
  place-items: center;
}
.chips {
  display: flex;
  gap: 9.4px;
  margin: 20px 31px 0 31.8px;
}
.chips span {
  height: 44.500px;
  padding: 2px 19.1px 0;
  border-radius: 15px;
  background: #f5f7f5;
  display: flex;
  align-items: center;
  font-size: 17.3px;
  font-weight: 500;
}
.chips .on {
  background: #1f7840;
  color: #fff;
  box-shadow: 0 2px 4px rgba(0, 0, 0, 0.14);
}
.bulk {
  display: flex;
  justify-content: space-between;
  margin: 33.5px 38px 0 39.500px;
  line-height: 26px;
}
.loads {
  margin: 29.5px 42.600px 0 20px;
  flex: 1;
  min-height: 0;
}
.load {
  height: 216.500px;
  border: 1.6px solid #2aa558;
  border-radius: 25px;
  background: #eaf7ef;
  margin-bottom: 14px;
  padding: 22px 22px 0 56px;
}
.ghost {
  border-color: #b2dec1;
  background: #e2ece6;
}
.row1 {
  display: flex;
  align-items: center;
  height: 32px;
}
.row1 i {
  width: 12.6px;
  height: 12.6px;
  border-radius: 50%;
}
.row1 b {
  margin-left: 10px;
  font-size: 20.5px;
}
.ftl {
  margin-left: auto;
  height: 30px;
  padding: 2px 13px 0;
  border-radius: 12px;
  background: #d8eae0;
  color: #1f7840;
  font-size: 15.75px;
  display: flex;
  align-items: center;
  font-weight: 500;
}
.tick {
  width: 31.500px;
  height: 31.500px;
  border-radius: 11px;
  background: #1f7840;
  color: #fff;
  display: grid;
  place-items: center;
  margin-left: auto;
}
.ftl + .tick {
  margin-left: 9.500px;
}
.row2 {
  display: flex;
  align-items: center;
  gap: 14px;
  margin-top: 17.5px;
  height: 30px;
  font-size: 18.9px;
  color: #44524a;
}
.row2 .icon {
  margin-top: -4px;
}
.row3 {
  display: flex;
  gap: 17px;
  margin-top: 17px;
  height: 26px;
}
.row3 span,
.t2 span,
.t5 span,
.t6 span {
  display: flex;
  align-items: center;
  gap: 6.5px;
}
.row3 .icon,
.t2 .icon,
.t5 .icon,
.t6 .icon {
  position: relative;
  top: -2px;
}
.row3 span:first-child {
  gap: 7.5px;
}
.row4 {
  margin-top: 20px;
  font-size: 15.75px;
  line-height: 24px;
  color: #2c3a32;
}

.two {
  margin-left: 31.5px;
}
.bundle {
  margin: 29.5px 31.5px 0;
  height: 62px;
  flex: none;
  border: 0;
  border-radius: 22px;
  background: #1f7840;
  color: #fff;
  font: 500 20.5px Inter, sans-serif;
  display: flex;
  align-items: center;
  justify-content: center;
  gap: 14px;
  box-shadow: 0 2px 5px rgba(34, 160, 84, 0.45);
}
.tours {
  margin: 18.500px 44px 0 19px;
  flex: 1;
  min-height: 0;
}
.tour {
  height: 320px;
  border-radius: 26px;
  background: #fdfefd;
  margin-bottom: 19px;
  padding: 25px 23px 0 23px;
}
.t1 {
  display: flex;
  align-items: center;
  height: 30px;
}
.t1 i {
  width: 19.500px;
  height: 19.500px;
  border-radius: 50%;
}
.t1 b {
  margin-left: 15.500px;
  font-size: 20.5px;
}
.badge {
  margin-left: auto;
  height: 30px;
  border-radius: 12.500px;
  padding: 0 12.500px;
  display: flex;
  align-items: center;
  gap: 6px;
  font-size: 15.75px;
}
.opt {
  background: #e6f2ea;
  color: #1f7840;
}
.plan {
  background: #eff4ff;
  color: #2563eb;
}
.disp {
  background: #fff9ec;
  color: #d97706;
}
.chev {
  margin-left: 13px;
  color: #26352c;
}
.t2 {
  display: flex;
  gap: 18.5px;
  margin: 13.500px 0 0 35px;
  height: 26px;
}
.blue {
  color: #4d86f5;
}
.t3 {
  display: flex;
  align-items: center;
  margin: 11.5px 0 0 35px;
  font-size: 15.75px;
  color: #4a584f;
}
.t3 span {
  height: 27.500px;
  padding: 0 12.600px;
  border-radius: 11px;
  background: #f3f4f6;
  font-size: 14.2px;
  display: flex;
  align-items: center;
  margin-right: 13px;
}
.t3 .hyb {
  background: #eff4ff;
  color: #2563eb;
}
.t4 {
  display: flex;
  justify-content: space-between;
  margin: 20.5px 3px 0 35px;
  font-size: 15.75px;
  line-height: 24px;
}
.t4 em {
  color: #45534b;
}
.bar {
  margin: 4.5px 0 0 35px;
  height: 9.500px;
  border-radius: 5px;
  background: #eff4f1;
  overflow: hidden;
}
.bar i {
  display: block;
  height: 100%;
  border-radius: 5px;
}
.t5 {
  display: flex;
  gap: 18px;
  margin: 17px 0 0 35px;
  height: 26px;
}
.t6 {
  display: flex;
  justify-content: space-between;
  margin: 31px 19px 0;
  height: 26px;
  font-weight: 500;
}
.t6 span {
  gap: 9.500px;
}
.t6 .green {
  gap: 9px;
}
.del {
  color: #ef3340;
}

.map {
  position: relative;
  border: 1.6px solid #edf3ef;
  border-radius: 25px;
  overflow: hidden;
}
.canvas {
  position: absolute;
  inset: 0;
  width: 100%;
  height: 100%;
}
.sea,
.water {
  fill: #d5dade;
}
.isle {
  fill: #fafaf8;
}
.lane {
  fill: none;
  stroke: #f1f1f0;
  stroke-width: 1.2;
}
.road {
  fill: none;
  stroke: #ebebeb;
  stroke-width: 1.500;
}
.river {
  fill: none;
  stroke: #dfe4e7;
  stroke-width: 3.500;
  stroke-linejoin: round;
}
.halo {
  fill: none;
  stroke: #f6f1f1;
  stroke-width: 20;
  stroke-linejoin: round;
}
.line {
  fill: none;
  stroke: #f0dadd;
  stroke-width: 5;
  stroke-linejoin: round;
}
.dim {
  stroke: #eadcdf;
}
.dots {
  fill: none;
  stroke: #edced2;
  stroke-width: 4;
  stroke-dasharray: 6 6;
  stroke-linejoin: round;
}
.places {
  fill: #95a2af;
  font-size: 16.500px;
  font-weight: 600;
}
.places text {
  paint-order: stroke;
  stroke: #fafaf8;
  stroke-width: 3px;
  stroke-linejoin: round;
}
.places .big {
  font-size: 19.500px;
  font-weight: 600;
  fill: #a0abb6;
}
.mk {
  filter: drop-shadow(0 2px 3px rgba(0, 0, 0, 0.14));
}
.mt {
  fill: #fff;
  font-size: 15px;
  font-weight: 700;
}
.card {
  position: absolute;
  border-radius: 25px;
  background: rgba(255, 255, 255, 0.84);
  border: 1.6px solid rgba(255, 255, 255, 0.6);
  box-shadow: 0 6px 18px rgba(40, 60, 50, 0.09);
}
.title {
  left: 24.500px;
  top: 25.5px;
  width: 278.500px;
  height: 89px;
  display: flex;
  align-items: center;
  padding-left: 25.5px;
}
.sq {
  width: 44px;
  height: 44px;
  border-radius: 15px;
  background: #e2efe7;
  color: #1f7840;
  display: grid;
  place-items: center;
  margin-right: 16px;
}
.tt {
  padding-top: 5px;
}
.title b {
  display: block;
  font-size: 20.5px;
  font-weight: 500;
  line-height: 28px;
  color: #0d1811;
}
.title span {
  font-size: 15.75px;
  line-height: 26px;
  display: block;
}
.layers {
  right: 26.500px;
  top: 25.5px;
  width: 238px;
  height: 228px;
  padding: 21.5px 19px 0;
}
small {
  display: block;
  font-size: 14.200px;
  line-height: 20px;
  letter-spacing: 0.7px;
  color: #93a89b;
}
.lay {
  height: 44.600px;
  border-radius: 17px;
  display: flex;
  align-items: center;
  padding: 1px 15.500px 0;
  margin-top: 9.700px;
  font-weight: 500;
}
.lay .icon {
  margin-right: 13px;
  position: relative;
  top: -1.5px;
}
small + .lay {
  margin-top: 13px;
}
.lay em {
  margin-left: auto;
  font-size: 14.200px;
  font-weight: 400;
  opacity: 0.6;
}
.gas {
  background: #fffaec;
  color: #bb4d00;
}
.ev {
  background: rgba(236, 250, 241, 0.85);
  color: #15803d;
}
.wp {
  background: rgba(213, 235, 221, 0.6);
  color: #1f7840;
}
.legend {
  left: 24.500px;
  bottom: 38.500px;
  width: 303px;
  height: 490px;
  padding: 22px 22px 0 23px;
  background: rgba(255, 255, 255, 0.9);
  backdrop-filter: blur(16px);
}
.lg {
  height: 35.400px;
  display: flex;
  align-items: center;
  color: #4d5a52;
}
small + .lg {
  margin-top: 8px;
}
.lg i {
  width: 25px;
  height: 9.500px;
  border-radius: 5px;
  margin-right: 13px;
  position: relative;
  top: -1.5px;
}
.lg em {
  margin-left: auto;
  font-size: 14.200px;
  color: #adbdb3;
}
.un i {
  width: 9.500px;
  height: 9.500px;
  background: #c5d0c9;
  margin: 0 16.5px 0 3px;
}
hr {
  border: 0;
  height: 1.6px;
  background: #eef3f0;
  margin: 7px 0 14.5px;
}
.mk2 {
  margin-bottom: 6px;
}
.lm {
  display: flex;
  align-items: center;
  height: 31.500px;
  font-size: 15.75px;
  color: #66746b;
}
.lm span {
  width: 25px;
  height: 25px;
  margin-right: 13px;
  display: grid;
  place-items: center;
}
.p {
  background: #e3f1e9;
  color: #1f7840;
  border-radius: 6px;
  font-size: 11px;
  font-weight: 700;
}
.p.d {
  border-radius: 50%;
}
.g {
  border: 3px solid #fbb02a;
  border-radius: 6px;
  background: #fff;
  color: #f59e0b;
}
.g.e {
  border-color: #22c55e;
  color: #22c55e;
}

footer {
  height: 56.600px;
  flex: none;
  border-top: 1.600px solid #e3ede7;
  background: linear-gradient(90deg, #d3e2d8, #d9eae0);
  display: flex;
  align-items: center;
  padding: 3px 36.5px 0 37.800px;
}
footer i {
  width: 9.500px;
  height: 9.500px;
  border-radius: 50%;
  background: #77ab8a;
  margin: -3px 9.500px 0 0;
}
.sep {
  margin: 0 25.3px;
}
.sync {
  margin-left: auto;
}
footer .icon {
  margin: -4px 9px 0 19.5px;
  color: #1f7840;
}
footer b {
  font-size: 25px;
  font-weight: 500;
  color: #1f7840;
  margin-top: -5.5px;
}
</style>
